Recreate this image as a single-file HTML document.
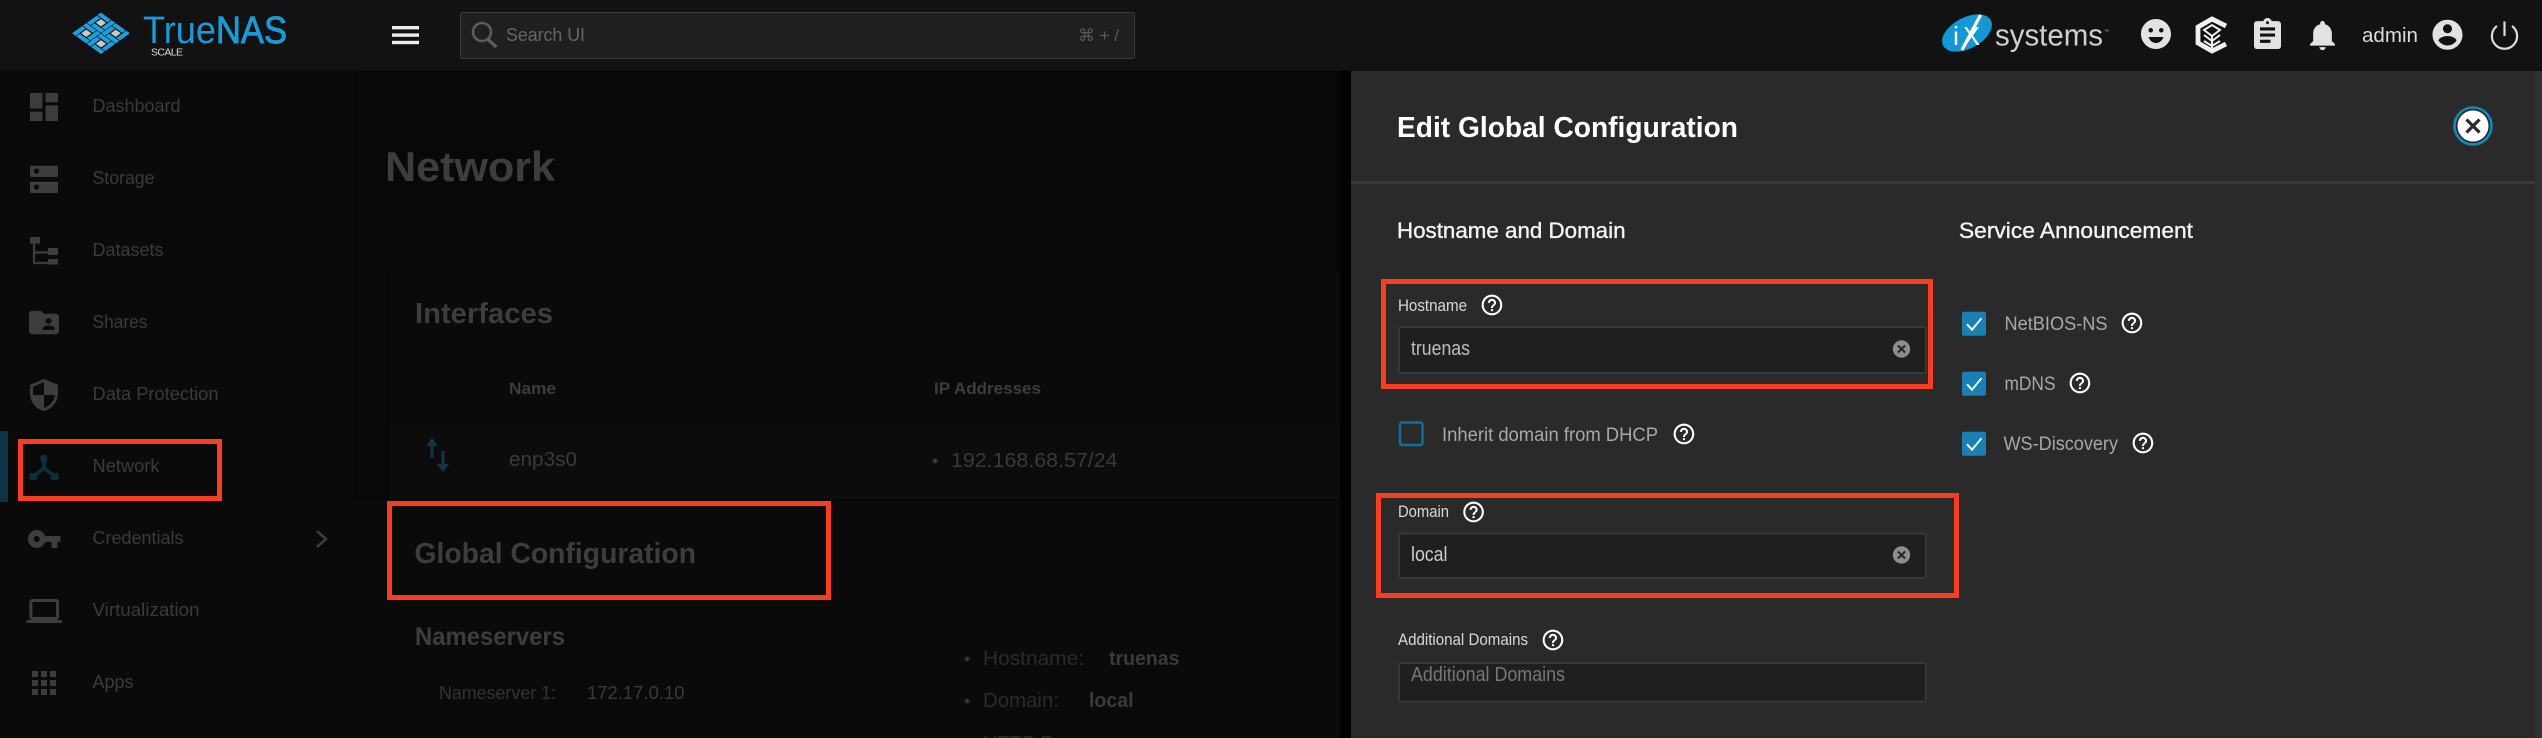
<!DOCTYPE html>
<html lang="en"><head><meta charset="utf-8"><title>TrueNAS Network</title>
<style>
html,body{margin:0;padding:0;background:#0a0a0a;width:2542px;height:738px;overflow:hidden}
svg{display:block}
#page{filter:blur(.35px)}
text{font-family:"Liberation Sans","DejaVu Sans",sans-serif}
.nav{font-size:18px;fill:#3b3b3b}
.lbl{font-size:17px;fill:#d8d8d8}
.val{font-size:20px;fill:#bdbdbd}
.chk{font-size:19px;fill:#a8a8a8}
.hd{font-size:22px;fill:#f4f4f4;stroke:#f4f4f4;stroke-width:.35px}
.dimh{font-weight:700;fill:#3d3d3d}
.dim{fill:#343434}
.ic{fill:#3d3d3d}
.top{fill:#e2e2e2}
</style></head><body>
<svg id="page" width="2542" height="738" viewBox="0 0 2542 738" xmlns="http://www.w3.org/2000/svg">
<defs>
<g id="help"><path fill="#fff" d="M11 18h2v-2h-2v2zm1-16C6.48 2 2 6.48 2 12s4.48 10 10 10 10-4.48 10-10S17.52 2 12 2zm0 18c-4.41 0-8-3.59-8-8s3.59-8 8-8 8 3.59 8 8-3.59 8-8 8zm0-14c-2.21 0-4 1.79-4 4h2c0-1.1.9-2 2-2s2 .9 2 2c0 2-3 1.75-3 5h2c0-2.25 3-2.5 3-5 0-2.21-1.79-4-4-4z"/></g>
<g id="clr"><circle r="8.7" fill="#8d8d8d"/><path d="M-3.6-3.6 3.6 3.6M3.6-3.6-3.6 3.6" stroke="#222" stroke-width="2" fill="none"/></g>
<g id="cb"><rect width="24" height="24" rx="2" fill="#1a7fb2"/><path d="M5 12.5 10 18 19.5 6.5" stroke="#e8f3f8" stroke-width="2" fill="none"/></g>
<g id="cell" fill="#1f9fdc">
<rect x="-1.45" y="-1.45" width="2.05" height=".72"/>
<rect x=".73" y="-1.45" width=".72" height="2.05"/>
<rect x="-.6" y=".73" width="2.05" height=".72"/>
<rect x="-1.45" y="-.6" width=".72" height="2.05"/>
<rect x="-.52" y="-.52" width="1.04" height="1.04" fill="#c9c9c9"/>
</g>
</defs>

<!-- backgrounds -->
<rect width="2542" height="738" fill="#080808"/>
<rect width="355" height="667" y="71" fill="#0a0a0a"/>
<rect x="390" y="272" width="961" height="228" fill="#0a0a0a"/>
<rect x="390" y="423" width="961" height="74" fill="#0c0c0c"/>
<rect x="390" y="497" width="961" height="1" fill="#111"/>
<rect x="355" y="500" width="996" height="238" fill="#0a0a0a"/>
<rect width="2542" height="70.5" fill="#121212"/>
<rect x="1340" y="71" width="11" height="667" fill="#020202"/>

<!-- logo -->
<g transform="matrix(4.9 3.5 -4.9 3.5 101 33.300)">
<use href="#cell" transform="translate(-1.5 -1.5)"/>
<use href="#cell" transform="translate(1.5 -1.5)"/>
<use href="#cell" transform="translate(-1.5 1.5)"/>
<use href="#cell" transform="translate(1.5 1.5)"/>
</g>
<text x="143" y="43" font-size="38" fill="#1a9ad8" textLength="73" lengthAdjust="spacingAndGlyphs">True</text>
<text x="216" y="43" font-size="38" fill="#1a9ad8" stroke="#1a9ad8" stroke-width=".9" textLength="71" lengthAdjust="spacingAndGlyphs">NAS</text>
<text x="151" y="55.500" font-size="10.500" fill="#dcdcdc" textLength="32" lengthAdjust="spacing">SCALE</text>

<!-- hamburger -->
<rect x="392" y="26" width="27" height="3.4" fill="#eee"/><rect x="392" y="33.4" width="27" height="3.4" fill="#eee"/><rect x="392" y="40.8" width="27" height="3.4" fill="#eee"/>

<!-- search -->
<rect x="460.5" y="12.5" width="674" height="46" rx="2" fill="#1f1f1f" stroke="#3b3b3b"/>
<circle cx="482" cy="32" r="9" fill="none" stroke="#5c5c5c" stroke-width="2.6"/>
<path d="M488 39.5 496.5 47" stroke="#5c5c5c" stroke-width="3.4" fill="none"/>
<text x="506" y="41" font-size="18" fill="#666" textLength="79" lengthAdjust="spacingAndGlyphs">Search UI</text>
<text x="1078" y="41" font-size="17" fill="#5a5a5a" textLength="41" lengthAdjust="spacingAndGlyphs">⌘ + /</text>

<!-- right of topbar -->
<ellipse cx="1967" cy="33" rx="27" ry="15.5" transform="rotate(-28 1967 33)" fill="#1397d5"/>
<text x="1953" y="45" font-size="26" fill="#fff" textLength="6" lengthAdjust="spacingAndGlyphs">i</text>
<text x="1963" y="45" font-size="26" fill="#fff" textLength="17" lengthAdjust="spacingAndGlyphs">X</text>
<path d="M1980.500 15 1962 50" stroke="#fff" stroke-width="3.200" fill="none"/>
<text x="1995" y="45.500" font-size="31" fill="#cfcfcf" textLength="108" lengthAdjust="spacingAndGlyphs">systems</text>
<text x="2104" y="33" font-size="5" fill="#bbb">™</text>
<path class="top" transform="translate(2138 16) scale(1.5)" d="M11.99 2C6.47 2 2 6.48 2 12s4.47 10 9.99 10C17.52 22 22 17.52 22 12S17.52 2 11.99 2zM8.5 8c.83 0 1.5.67 1.5 1.5S9.33 11 8.5 11 7 10.33 7 9.5 7.67 8 8.5 8zM12 18c-2.28 0-4.22-1.66-5-4h10c-.78 2.34-2.72 4-5 4zm3.5-7c-.83 0-1.5-.67-1.5-1.5S14.67 8 15.5 8s1.5.67 1.5 1.5-.67 1.5-1.5 1.5z"/>
<g fill="none" stroke="#f0f0f0">
<path d="M2226 26 2212 19 2198 27V43L2212 51 2226 44" stroke-width="4.8"/>
<path d="M2204 30 2212 25 2220 30 2212 36Z" stroke-width="2"/>
<path d="M2204 35 2212 41 2220 35M2204 41 2212 46 2220 41M2212 36V48" stroke-width="2"/>
</g>
<path class="top" transform="translate(2249.5 16.5) scale(1.5 1.55)" d="M19 3h-4.18C14.4 1.84 13.3 1 12 1c-1.3 0-2.4.84-2.82 2H5c-1.1 0-2 .9-2 2v14c0 1.1.9 2 2 2h14c1.1 0 2-.9 2-2V5c0-1.1-.9-2-2-2zm-7 0c.55 0 1 .45 1 1s-.45 1-1 1-1-.45-1-1 .45-1 1-1zm2 14H7v-2h7v2zm3-4H7v-2h10v2zm0-4H7V7h10v2z"/>
<path class="top" transform="translate(2303.8 17.3) scale(1.56 1.49)" d="M12 22c1.1 0 2-.9 2-2h-4c0 1.1.89 2 2 2zm6-6v-5c0-3.07-1.64-5.64-4.5-6.32V4c0-.83-.67-1.5-1.5-1.5s-1.5.67-1.5 1.5v.68C7.63 5.36 6 7.92 6 11v5l-2 2v1h16v-1l-2-2z"/>
<text x="2362" y="42" font-size="20" fill="#dcdcdc" textLength="56" lengthAdjust="spacingAndGlyphs">admin</text>
<path class="top" transform="translate(2429.5 16.7) scale(1.5)" d="M12 2C6.48 2 2 6.48 2 12s4.48 10 10 10 10-4.48 10-10S17.52 2 12 2zm0 3c1.66 0 3 1.34 3 3s-1.34 3-3 3-3-1.34-3-3 1.34-3 3-3zm0 14.2c-2.5 0-4.71-1.28-6-3.22.03-1.99 4-3.08 6-3.08 1.99 0 5.97 1.09 6 3.08-1.29 1.94-3.5 3.22-6 3.22z"/>
<path d="M2497 26A12.6 12.6 0 1 0 2512 26M2504.5 21.5V36" fill="none" stroke="#dcdcdc" stroke-width="2.2"/>

<!-- sidebar -->
<path class="ic" transform="translate(25.3 88.3) scale(1.556)" d="M3 13h8V3H3v10zm0 8h8v-6H3v6zm10 0h8V11h-8v10zm0-18v6h8V3h-8z"/>
<text class="nav" x="92.5" y="112" textLength="88" lengthAdjust="spacingAndGlyphs">Dashboard</text>
<path class="ic" fill-rule="evenodd" d="M31 165.7H57a1 1 0 0 1 1 1V176a1 1 0 0 1-1 1H31a1 1 0 0 1-1-1V166.7a1 1 0 0 1 1-1ZM36.5 168.5a2.6 2.6 0 1 0 .01 0ZM31 181.7H57a1 1 0 0 1 1 1V192a1 1 0 0 1-1 1H31a1 1 0 0 1-1-1V182.7a1 1 0 0 1 1-1ZM36.5 184.5a2.6 2.6 0 1 0 .01 0Z"/>
<text class="nav" x="92.5" y="184" textLength="62" lengthAdjust="spacingAndGlyphs">Storage</text>
<g class="ic"><rect x="30" y="237" width="10" height="6.5"/><rect x="48" y="248" width="10" height="7"/><rect x="48" y="259" width="10" height="5.5"/></g>
<path d="M34 243V263H48M34 252.5H48" fill="none" stroke="#3d3d3d" stroke-width="2.2"/>
<text class="nav" x="92.5" y="256" textLength="71" lengthAdjust="spacingAndGlyphs">Datasets</text>
<path class="ic" transform="translate(26 305) scale(1.5 1.46)" d="M20 6h-8l-2-2H4c-1.1 0-1.99.9-1.99 2L2 18c0 1.1.9 2 2 2h16c1.1 0 2-.9 2-2V8c0-1.1-.9-2-2-2zm-5 3c1.1 0 2 .9 2 2s-.9 2-2 2-2-.9-2-2 .9-2 2-2zm4 8h-8v-1c0-1.33 2.67-2 4-2s4 .67 4 2v1z"/>
<text class="nav" x="92.5" y="328" textLength="55" lengthAdjust="spacingAndGlyphs">Shares</text>
<path class="ic" transform="translate(25.3 377.5) scale(1.556 1.46)" d="M12 1L3 5v6c0 5.55 3.84 10.74 9 12 5.16-1.26 9-6.45 9-12V5l-9-4zm0 10.99h7c-.53 4.12-3.28 7.79-7 8.94V12H5V6.3l7-3.11v8.8z"/>
<text class="nav" x="92.5" y="400" textLength="126" lengthAdjust="spacingAndGlyphs">Data Protection</text>
<rect x="0" y="431" width="8" height="71" fill="#0d3344"/>
<g fill="#0c2f3f"><rect x="40.500" y="455" width="6.500" height="7.500" rx="1.500"/><rect x="29.500" y="473" width="8" height="7" rx="2"/><rect x="50.500" y="473" width="8" height="7" rx="2"/></g>
<path d="M44 458V468L34 476M44 468 54 476" fill="none" stroke="#0c2f3f" stroke-width="3.4"/>
<text class="nav" x="92.5" y="472" textLength="67" lengthAdjust="spacingAndGlyphs">Network</text>
<path class="ic" transform="translate(26.5 521) scale(1.47 1.5)" d="M12.65 10C11.83 7.67 9.61 6 7 6c-3.31 0-6 2.69-6 6s2.69 6 6 6c2.61 0 4.83-1.67 5.65-4H17v4h4v-4h2v-4H12.65zM7 14c-1.1 0-2-.9-2-2s.9-2 2-2 2 .9 2 2-.9 2-2 2z"/>
<text class="nav" x="92.5" y="544" textLength="91" lengthAdjust="spacingAndGlyphs">Credentials</text>
<path d="M317 531 326 539 317 547" fill="none" stroke="#3d3d3d" stroke-width="2.6"/>
<path class="ic" transform="translate(26.5 593) scale(1.48 1.5)" d="M20 18c1.1 0 1.99-.9 1.99-2L22 6c0-1.1-.9-2-2-2H4c-1.1 0-2 .9-2 2v10c0 1.1.9 2 2 2H0v2h24v-2h-4zM4 6h16v10H4V6z"/>
<text class="nav" x="92.5" y="616" textLength="107" lengthAdjust="spacingAndGlyphs">Virtualization</text>
<path class="ic" transform="translate(26 665) scale(1.5)" d="M4 8h4V4H4v4zm6 12h4v-4h-4v4zm-6 0h4v-4H4v4zm0-6h4v-4H4v4zm6 0h4v-4h-4v4zm6-10v4h4V4h-4zm-6 4h4V4h-4v4zm6 6h4v-4h-4v4zm0 6h4v-4h-4v4z"/>
<text class="nav" x="92.5" y="688" textLength="41" lengthAdjust="spacingAndGlyphs">Apps</text>

<!-- main content -->
<text class="dimh" x="385" y="181" font-size="42" textLength="170" lengthAdjust="spacingAndGlyphs">Network</text>
<text class="dimh" x="415" y="323" font-size="29" textLength="138" lengthAdjust="spacingAndGlyphs">Interfaces</text>
<text class="dimh" x="509" y="394" font-size="17" textLength="47" lengthAdjust="spacingAndGlyphs">Name</text>
<text class="dimh" x="934" y="394" font-size="17" textLength="107" lengthAdjust="spacingAndGlyphs">IP Addresses</text>
<path d="M432 438 426 446H430.5V458H433.5V446H438ZM443 472 437 464H441.5V451H444.5V464H449Z" fill="#123646"/>
<text x="509" y="466" font-size="20" fill="#3a3a3a" textLength="68" lengthAdjust="spacingAndGlyphs">enp3s0</text>
<circle cx="935" cy="461" r="2.4" fill="#3a3a3a"/>
<text x="951" y="467" font-size="20" fill="#3a3a3a" textLength="166.500" lengthAdjust="spacingAndGlyphs">192.168.68.57/24</text>
<text class="dimh" x="414.500" y="563" font-size="29" textLength="281.500" lengthAdjust="spacingAndGlyphs">Global Configuration</text>
<text class="dimh" x="415" y="645" font-size="25" textLength="150" lengthAdjust="spacingAndGlyphs">Nameservers</text>
<text x="439" y="699" font-size="18.500" fill="#333" textLength="117" lengthAdjust="spacingAndGlyphs">Nameserver 1:</text>
<text x="587" y="699" font-size="18.500" fill="#3a3a3a" textLength="97.500" lengthAdjust="spacingAndGlyphs">172.17.0.10</text>
<circle cx="967" cy="659" r="2.4" fill="#333"/><circle cx="967" cy="701" r="2.4" fill="#333"/>
<text x="983" y="665" font-size="20" fill="#2b2b2b" textLength="101" lengthAdjust="spacingAndGlyphs">Hostname:</text>
<text x="1109" y="665" font-size="20" font-weight="700" fill="#3a3a3a" textLength="70.500" lengthAdjust="spacingAndGlyphs">truenas</text>
<text x="983" y="707" font-size="20" fill="#2b2b2b" textLength="76" lengthAdjust="spacingAndGlyphs">Domain:</text>
<text x="1089" y="707" font-size="20" font-weight="700" fill="#3a3a3a" textLength="44.500" lengthAdjust="spacingAndGlyphs">local</text>
<svg x="980" y="730" width="100" height="8" viewBox="980 730 100 8" overflow="hidden"><text x="983" y="750" font-size="20" fill="#2b2b2b">HTTP P</text></svg>

<!-- side panel -->
<rect x="1351" y="71" width="1191" height="667" fill="#2a2a2a"/>
<rect x="2535" y="71" width="7" height="667" fill="#323232"/>
<rect x="1351" y="181" width="1184" height="3" fill="#3a3a3a"/>
<text x="1397" y="137" font-size="29" font-weight="700" fill="#fff" textLength="341" lengthAdjust="spacingAndGlyphs">Edit Global Configuration</text>
<circle cx="2473" cy="126" r="18.500" fill="#2a2a2a" stroke="#1488bd" stroke-width="2.6"/>
<circle cx="2473" cy="126" r="15.500" fill="#fff"/>
<path d="M2466.500 119.500 2479.500 132.500M2479.500 119.500 2466.500 132.500" stroke="#2a2a2a" stroke-width="3.2" fill="none"/>

<text class="hd" x="1397" y="238" textLength="228.500" lengthAdjust="spacingAndGlyphs">Hostname and Domain</text>
<text class="hd" x="1959" y="238" textLength="234" lengthAdjust="spacingAndGlyphs">Service Announcement</text>

<text class="lbl" x="1398" y="311" textLength="69" lengthAdjust="spacingAndGlyphs">Hostname</text>
<use href="#help" transform="translate(1479.600 292.600) scale(1.03)"/>
<rect x="1399" y="327" width="527" height="46" rx="2" fill="#1f1f1f" stroke="#383838" stroke-width="2"/>
<text class="val" x="1411" y="355" textLength="59" lengthAdjust="spacingAndGlyphs">truenas</text>
<use href="#clr" transform="translate(1901.500 349)"/>

<rect x="1400" y="422.500" width="22.500" height="22.500" rx="2" fill="none" stroke="#10719f" stroke-width="2.4"/>
<text class="chk" x="1442" y="441" textLength="216" lengthAdjust="spacingAndGlyphs">Inherit domain from DHCP</text>
<use href="#help" transform="translate(1671.600 421.600) scale(1.03)"/>

<text class="lbl" x="1398" y="517" textLength="51" lengthAdjust="spacingAndGlyphs">Domain</text>
<use href="#help" transform="translate(1461.200 499.600) scale(1.03)"/>
<rect x="1399" y="533.500" width="527" height="44.500" rx="2" fill="#1f1f1f" stroke="#383838" stroke-width="2"/>
<text class="val" x="1411" y="561" style="fill:#ccc" textLength="36.500" lengthAdjust="spacingAndGlyphs">local</text>
<use href="#clr" transform="translate(1901.500 555)"/>

<text class="lbl" x="1398" y="645" textLength="130" lengthAdjust="spacingAndGlyphs">Additional Domains</text>
<use href="#help" transform="translate(1540.600 627.600) scale(1.03)"/>
<rect x="1399" y="663" width="527" height="38.500" rx="2" fill="#1f1f1f" stroke="#383838" stroke-width="2"/>
<text x="1411" y="681" font-size="20" fill="#777" textLength="154" lengthAdjust="spacingAndGlyphs">Additional Domains</text>

<use href="#cb" transform="translate(1962 311.700)"/>
<text class="chk" x="2004.500" y="330" textLength="103" lengthAdjust="spacingAndGlyphs">NetBIOS-NS</text>
<use href="#help" transform="translate(2119.600 310.600) scale(1.03)"/>
<use href="#cb" transform="translate(1962 371.700)"/>
<text class="chk" x="2004.500" y="390" textLength="51" lengthAdjust="spacingAndGlyphs">mDNS</text>
<use href="#help" transform="translate(2067.600 370.600) scale(1.03)"/>
<use href="#cb" transform="translate(1962 431.700)"/>
<text class="chk" x="2003.500" y="450" textLength="114.500" lengthAdjust="spacingAndGlyphs">WS-Discovery</text>
<use href="#help" transform="translate(2130.600 430.600) scale(1.03)"/>

<!-- annotation boxes -->
<g fill="none" stroke="#f83e20" stroke-width="5">
<rect x="20.500" y="441.500" width="199" height="57"/>
<rect x="389.500" y="503.500" width="439" height="94"/>
<rect x="1383.500" y="281.500" width="547" height="105"/>
<rect x="1378.500" y="495.500" width="578" height="100"/>
</g>
</svg>
</body></html>
